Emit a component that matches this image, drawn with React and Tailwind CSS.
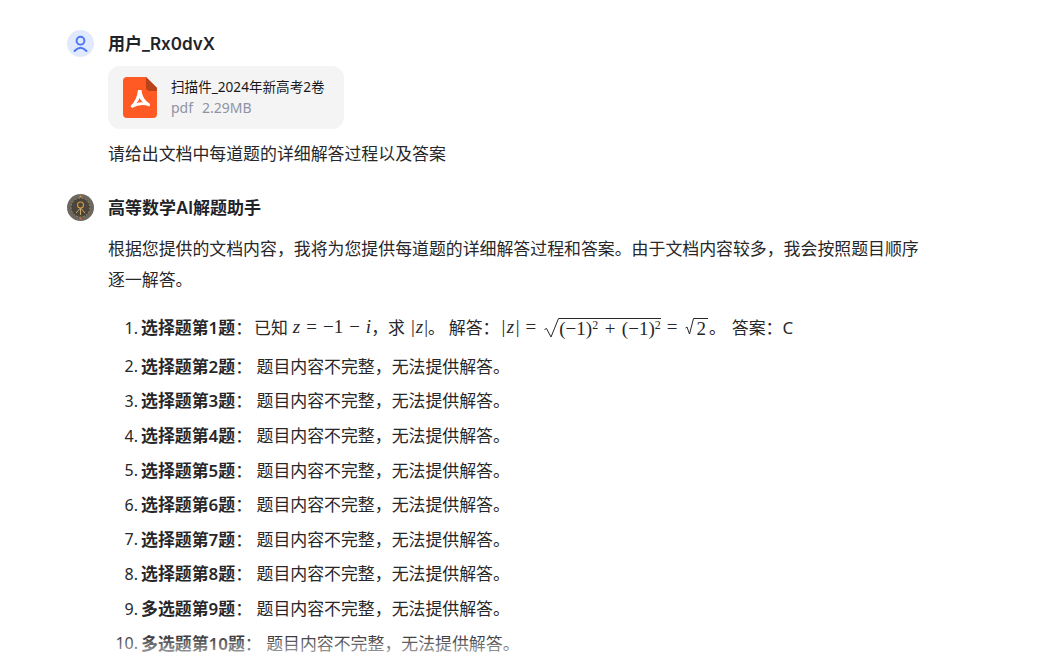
const rows = [
  ["选择题第2题", 2],
  ["选择题第3题", 3],
  ["选择题第4题", 4],
  ["选择题第5题", 5],
  ["选择题第6题", 6],
  ["选择题第7题", 7],
  ["选择题第8题", 8],
  ["多选题第9题", 9],
  ["多选题第10题", 10],
];

const UserIcon = () => (
  <svg width="27" height="27" viewBox="0 0 27 27" fill="none" stroke="#4c74f7" strokeWidth="1.9" strokeLinecap="round">
    <circle cx="13.5" cy="10.7" r="3.9" />
    <path d="M7.5 21Q13.5 14.500 19.500 21" />
  </svg>
);

const PdfIcon = () => (
  <svg width="34" height="41" viewBox="0 0 34 41">
    <path d="M4 0h19l11 11v26a4 4 0 0 1-4 4H4a4 4 0 0 1-4-4V4a4 4 0 0 1 4-4z" fill="#ff5a23" />
    <path d="M23 0l11 11v3h-7a4 4 0 0 1-4-4z" fill="#b8431a" />
    <path
      fillRule="evenodd"
      d="M15 13L18.500 13Q19 22 27 27L26.500 29.500Q18 26 9 31L7.500 29Q14 23 15 13zM16.600 21Q17.500 23.500 20 25.400Q16.500 25 13.500 26.500Q15.500 24 16.600 21z"
      fill="#fff"
    />
  </svg>
);

const BotAvatar = () => (
  <svg width="27" height="27" viewBox="0 0 27 27">
    <circle cx="13.5" cy="13.5" r="13.5" fill="#6d685f" />
    <circle cx="13.5" cy="13.5" r="10" fill="#4a453d" />
    <circle cx="13.5" cy="13.5" r="9.500" fill="none" stroke="#a8906a" strokeWidth="1" strokeDasharray="2 1.500" />
    <circle cx="13.5" cy="11" r="3" fill="none" stroke="#d9983f" strokeWidth="1.100" />
    <path d="M13.500 14v7M9 19l4.500-5 4.500 5" stroke="#c9a56a" fill="none" />
    <circle cx="13.5" cy="2.500" r="1" fill="#e0a050" />
    <circle cx="13.5" cy="24.500" r="1" fill="#d0703a" />
  </svg>
);

// the two radicals differ in width and depth, like the rendered formula
const BigRadical = () => (
  <svg width="15" height="20" viewBox="0 0 15 20" fill="none" stroke="#27272a" strokeWidth="1">
    <path d="M0.500 11.500l2-1 4.500 8.500L14.500 0.500h0.500" />
  </svg>
);

const SmallRadical = () => (
  <svg width="9" height="17" viewBox="0 0 9 17" fill="none" stroke="#27272a" strokeWidth="1">
    <path d="M0.500 10l1.500-1 2.500 7L8.500 0.500h0.500" />
  </svg>
);

const Sqrt = ({ radical, children }) => (
  <span className="inline-flex items-start h-[20px]">
    {radical}
    <span className="border-t border-[#27272a] h-[20px] leading-[19px] whitespace-nowrap">{children}</span>
  </span>
);

const Op = ({ children }) => <span className="mx-[6px]">{children}</span>;

const MathText = ({ children }) => (
  <span className="inline-flex items-center text-[19px] whitespace-nowrap font-['Liberation_Serif',serif]">{children}</span>
);

const Sup = ({ children }) => <span className="text-[12px] relative -top-[6px]">{children}</span>;

export default function App() {
  return (
    <div className="relative h-[669px] w-[1042px] overflow-hidden bg-white text-[#27272a] font-['Noto_Sans','Noto_Sans_CJK_SC',sans-serif]">
      <div className="pl-[67px] pt-[30px]">
        <div className="flex items-center gap-[14px] h-[27px]">
          <div className="h-[27px] w-[27px] rounded-full bg-[#e1e9ff]">
            <UserIcon />
          </div>
          <span className="mt-[2px] text-[17px] font-semibold text-[#1f2329] font-['Inter','Noto_Sans_CJK_SC',sans-serif]">用户_Rx0dvX</span>
        </div>

        <div className="ml-[41px] mt-[9px] flex h-[63px] w-[236px] items-center gap-[14.5px] rounded-xl bg-[#f4f4f5] pl-[14.5px]">
          <PdfIcon />
          <div>
            <div className="text-[13.6px] leading-[20px] text-[#18181b]">扫描件_2024年新高考2卷</div>
            <div className="flex gap-[9px] text-[14px] leading-[22px] text-[#8e93a4]">
              <span>pdf</span>
              <span>2.29MB</span>
            </div>
          </div>
        </div>

        <p className="ml-[41px] mt-[13px] text-[16.9px] leading-[24px]">请给出文档中每道题的详细解答过程以及答案</p>

        <div className="mt-[28px] flex items-center gap-[14px] h-[27px]">
          <BotAvatar />
          <span className="mt-[2px] text-[17px] font-semibold text-[#1f2329] font-['Inter','Noto_Sans_CJK_SC',sans-serif]">高等数学AI解题助手</span>
        </div>

        <p className="ml-[41px] mt-[13px] w-[820px] text-[16.9px] leading-[30.6px]">
          根据您提供的文档内容，我将为您提供每道题的详细解答过程和答案。由于文档内容较多，我会按照题目顺序逐一解答。
        </p>

        <ol className="ml-[41px] mt-[13px] text-[16.9px]">
          <li className="flex h-[41px] items-center whitespace-nowrap pb-[2px]">
            <span className="w-[30px] text-right text-[16px] mr-[3px]">1.</span>
            <b className="font-semibold">选择题第1题</b>
            <span>：</span>
            <span className="ml-[2px]">已知</span>
            <span className="w-[5px]" />
            <MathText>
              <i>z</i>
              <Op>=</Op>−1<Op>−</Op>
              <i>i</i>
            </MathText>
            <span>，求</span>
            <span className="w-[6px]" />
            <MathText>
              |<i className="px-[1px]">z</i>|
            </MathText>
            <span>。</span>
            <span className="w-[4px]" />
            <span>解答：</span>
            <span className="w-[2px]" />
            <MathText>
              |<i className="px-[1.5px]">z</i>|
              <span className="ml-[6px] mr-[8px]">=</span>
              <Sqrt radical={<BigRadical />}>
                (−1)<Sup>2</Sup>
                <span className="mx-[6.5px]">+</span>(−1)<Sup>2</Sup>
              </Sqrt>
              <span className="ml-[6px] mr-[8px]">=</span>
              <Sqrt radical={<SmallRadical />}>
                <span className="px-[2px]">2</span>
              </Sqrt>
            </MathText>
            <span className="ml-[1px]">。</span>
            <span className="ml-[6px]">答案：C</span>
          </li>
          {rows.map(([title, n]) => (
            <li key={n} className="flex h-[34.6px] items-center">
              <span className="w-[30px] text-right text-[16px] mr-[3px]">{n}.</span>
              <b className="font-semibold">{title}</b>
              <span>：</span>
              <span className="ml-[4.5px]">题目内容不完整，无法提供解答。</span>
            </li>
          ))}
        </ol>
      </div>
      <div className="absolute bottom-0 left-0 h-[36px] w-full bg-gradient-to-t from-white to-transparent" />
    </div>
  );
}
